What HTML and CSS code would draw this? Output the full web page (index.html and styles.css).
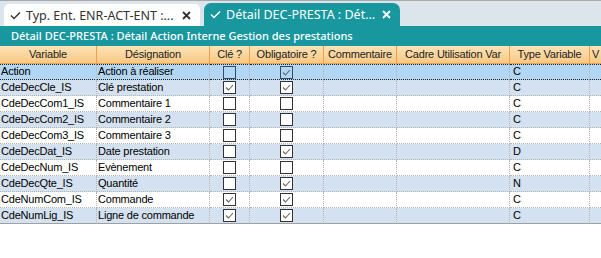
FILE: index.html
```html
<!DOCTYPE html>
<html lang="fr">
<head>
    <meta charset="UTF-8" />
    <title>Détail DEC-PRESTA</title>
    <link rel="stylesheet" href="styles.css">
</head>
<body>
    <div class="tabs">
        <div class="tab">
            <svg class="tick" width="11" height="9" viewBox="0 0 11 9"><path d="M1 4.5 L4 7.5 L10 1.5" fill="none" stroke="currentColor" stroke-width="1.4"/></svg>
            <span class="label">Typ. Ent. ENR-ACT-ENT :...</span>
            <svg class="close" width="9" height="9" viewBox="0 0 9 9"><path d="M1 1 L8 8 M8 1 L1 8" stroke="currentColor" stroke-width="1.8"/></svg>
        </div>
        <div class="tab active">
            <svg class="tick" width="11" height="9" viewBox="0 0 11 9"><path d="M1 4.5 L4 7.5 L10 1.5" fill="none" stroke="currentColor" stroke-width="1.4"/></svg>
            <span class="label">Détail DEC-PRESTA : Dét...</span>
            <svg class="close" width="9" height="9" viewBox="0 0 9 9"><path d="M1 1 L8 8 M8 1 L1 8" stroke="currentColor" stroke-width="1.8"/></svg>
        </div>
    </div>

    <div class="title">Détail DEC-PRESTA : Détail Action Interne Gestion des prestations</div>

    <div class="grid">
        <div class="row head">
            <div>Variable</div><div>Désignation</div><div>Clé ?</div><div>Obligatoire ?</div>
            <div>Commentaire</div><div>Cadre Utilisation Var</div><div>Type Variable</div><div class="edge">V</div>
        </div>
        <div class="row sel">
            <div>Action</div><div>Action à réaliser</div>
            <div class="chk"><span class="cb"></span></div>
            <div class="chk"><span class="cb on"></span></div>
            <div></div><div></div><div class="type">C</div><div></div>
        </div>
        <div class="row alt">
            <div>CdeDecCle_IS</div><div>Clé prestation</div>
            <div class="chk"><span class="cb on"></span></div>
            <div class="chk"><span class="cb on"></span></div>
            <div></div><div></div><div class="type">C</div><div></div>
        </div>
        <div class="row">
            <div>CdeDecCom1_IS</div><div>Commentaire 1</div>
            <div class="chk"><span class="cb"></span></div>
            <div class="chk"><span class="cb"></span></div>
            <div></div><div></div><div class="type">C</div><div></div>
        </div>
        <div class="row alt">
            <div>CdeDecCom2_IS</div><div>Commentaire 2</div>
            <div class="chk"><span class="cb"></span></div>
            <div class="chk"><span class="cb"></span></div>
            <div></div><div></div><div class="type">C</div><div></div>
        </div>
        <div class="row">
            <div>CdeDecCom3_IS</div><div>Commentaire 3</div>
            <div class="chk"><span class="cb"></span></div>
            <div class="chk"><span class="cb"></span></div>
            <div></div><div></div><div class="type">C</div><div></div>
        </div>
        <div class="row alt">
            <div>CdeDecDat_IS</div><div>Date prestation</div>
            <div class="chk"><span class="cb"></span></div>
            <div class="chk"><span class="cb on"></span></div>
            <div></div><div></div><div class="type">D</div><div></div>
        </div>
        <div class="row">
            <div>CdeDecNum_IS</div><div>Evènement</div>
            <div class="chk"><span class="cb"></span></div>
            <div class="chk"><span class="cb"></span></div>
            <div></div><div></div><div class="type">C</div><div></div>
        </div>
        <div class="row alt">
            <div>CdeDecQte_IS</div><div>Quantité</div>
            <div class="chk"><span class="cb"></span></div>
            <div class="chk"><span class="cb on"></span></div>
            <div></div><div></div><div class="type">N</div><div></div>
        </div>
        <div class="row">
            <div>CdeNumCom_IS</div><div>Commande</div>
            <div class="chk"><span class="cb on"></span></div>
            <div class="chk"><span class="cb on"></span></div>
            <div></div><div></div><div class="type">C</div><div></div>
        </div>
        <div class="row alt last">
            <div>CdeNumLig_IS</div><div>Ligne de commande</div>
            <div class="chk"><span class="cb on"></span></div>
            <div class="chk"><span class="cb on"></span></div>
            <div></div><div></div><div class="type">C</div><div></div>
        </div>
    </div>
</body>
</html>
```

FILE: styles.css
```css
body {
    margin: 0;
    width: 601px;
    height: 258px;
    overflow: hidden;
    background: #fff;
    font-family: "Liberation Sans", Arial, sans-serif;
}

/* onglets */
.tabs {
    height: 26px;
    box-sizing: border-box;
    border-top: 1px solid #a9a9a9;
    background: #dce4ec;
    display: flex;
    align-items: flex-end;
    padding-left: 4px;
    gap: 4px;
    font-family: "Noto Sans", sans-serif;
    font-size: 12.5px;
}

.tab {
    width: 196px;
    height: 22px;
    box-sizing: border-box;
    background: #fff;
    color: #333;
    border-radius: 5px 5px 0 0;
    display: flex;
    align-items: center;
    padding: 0 9px 0 6px;
}

.tab.active {
    height: 23px;
    background: #18979f;
    color: #fff;
    border-radius: 7px 7px 0 0;
}

.tab .tick {
    margin-right: 5px;
}

.tab .label {
    flex: 1;
    white-space: nowrap;
    overflow: hidden;
}

/* bandeau titre */
.title {
    height: 20px;
    background: #18979f;
    color: #fff;
    font-family: "Noto Sans", sans-serif;
    font-size: 11px;
    font-weight: 500;
    line-height: 20px;
    padding-left: 11px;
    white-space: nowrap;
}

/* grille */
.row {
    display: grid;
    grid-template-columns: 97px 113px 40px 74px 73px 113px 80px 11px;
    height: 16px;
    font-size: 11px;
    letter-spacing: -0.2px;
    line-height: 15px;
    color: #000;
}

.row > div {
    box-sizing: border-box;
    border-right: 1px dotted #b4b4b4;
    border-bottom: 1px dotted #b4b4b4;
    padding-left: 1px;
    white-space: nowrap;
    overflow: hidden;
}

.row > div:last-child {
    border-right: none;
}

.row.head {
    height: 18px;
    background: linear-gradient(#fde2b6, #f8c883);
    color: #222;
    line-height: 17px;
}

.row.head > div {
    border-right: 1px solid #f0a04b;
    border-bottom: 1px solid #f0a04b;
    text-align: center;
    padding-left: 0;
}

.row.head > .edge {
    border-right: none;
    text-align: left;
    padding-left: 2px;
}

.row.alt {
    background: #d4e1f1;
}

.row.sel {
    background: #b3d6f3;
}

.row.sel > div {
    border-top: 1px dotted #222;
    border-bottom: 1px dotted #222;
    line-height: 13px;
}

.row.last > div {
    border-bottom: 1px solid #a0a0a0;
}

.row .chk {
    display: flex;
    justify-content: center;
    align-items: center;
    padding-left: 0;
}

.cb {
    width: 13px;
    height: 13px;
    box-sizing: border-box;
    border: 1px solid #333;
    background-color: #fff;
}

.row.sel .cb {
    border-color: #2f4c6b;
    background-color: transparent;
}

.cb.on {
    background-image: url("data:image/svg+xml,%3Csvg xmlns='http://www.w3.org/2000/svg' width='11' height='11'%3E%3Cpath d='M2 5.5 L4.5 8 L9 3' fill='none' stroke='%23666' stroke-width='1.1'/%3E%3C/svg%3E");
    background-repeat: no-repeat;
}

.row .type {
    padding-left: 3px;
}
```
